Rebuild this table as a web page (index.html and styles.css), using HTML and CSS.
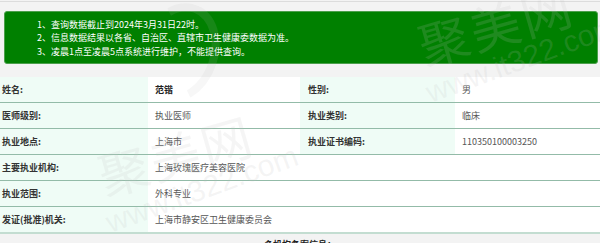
FILE: index.html
```html
<!DOCTYPE html>
<html lang="zh-CN">
<head>
<meta charset="utf-8">
<title>医师执业注册信息</title>
<link rel="stylesheet" href="styles.css">
</head>
<body>
<div class="page">
  <div class="topline"></div>
  <div class="notice">
    <ol class="notice-list">
      <li>1、查询数据截止到2024年3月31日22时。</li>
      <li>2、信息数据结果以各省、自治区、直辖市卫生健康委数据为准。</li>
      <li>3、凌晨1点至凌晨5点系统进行维护，不能提供查询。</li>
    </ol>
  </div>
  <table class="info">
    <colgroup>
      <col class="c1"><col class="c2"><col class="c3"><col class="c4">
    </colgroup>
    <tr>
      <th class="lab first">姓名:</th><td class="val strong">范锴</td>
      <th class="lab">性别:</th><td class="val">男</td>
    </tr>
    <tr>
      <th class="lab first">医师级别:</th><td class="val">执业医师</td>
      <th class="lab">执业类别:</th><td class="val">临床</td>
    </tr>
    <tr>
      <th class="lab first">执业地点:</th><td class="val">上海市</td>
      <th class="lab">执业证书编码:</th><td class="val">110350100003250</td>
    </tr>
    <tr>
      <th class="lab first">主要执业机构:</th><td class="val" colspan="3">上海玫瑰医疗美容医院</td>
    </tr>
    <tr>
      <th class="lab first">执业范围:</th><td class="val" colspan="3">外科专业</td>
    </tr>
    <tr class="last">
      <th class="lab first">发证(批准)机关:</th><td class="val" colspan="3">上海市静安区卫生健康委员会</td>
    </tr>
    <tr class="section">
      <td colspan="4">多机构备案信息：</td>
    </tr>
  </table>
  <div class="wm wm-a" aria-hidden="true">
    <span class="wm-title">聚美网</span>
    <span class="wm-url">www.it322.com</span>
  </div>
  <div class="wm wm-b" aria-hidden="true">
    <span class="wm-title">聚美网</span>
    <span class="wm-url">www.it322.com</span>
  </div>
  <div class="wm-ring"></div>
</div>
</body>
</html>
```
FILE: styles.css
```css
html, body {
  margin: 0;
  padding: 0;
}
body {
  background: #f3f3f3;
  font-family: "Noto Sans CJK SC", "Noto Sans", sans-serif;
  font-size: 9px;
  color: #555;
  overflow: hidden;
}
.page {
  position: relative;
  width: 600px;
  height: 243px;
  overflow: hidden;
}
.topline {
  margin-top: 1px;
  border-top: 1px solid #dcdcdc;
}
.notice {
  margin: 9px 2px 0 4px;
  background: #008000;
  border: 1px solid #4c9f4c;
  border-radius: 3px;
  padding: 6px 0 5px 32px;
  color: #fff;
  line-height: 13.3px;
}
.notice-list {
  margin: 0;
  padding: 0;
  list-style: none;
}
.info {
  margin-top: 13px;
  width: 600px;
  border-collapse: collapse;
  table-layout: fixed;
}
.c1 { width: 148px; }
.c2 { width: 152px; }
.c3 { width: 155px; }
.c4 { width: 145px; }
.info th, .info td {
  height: 25px;
  padding: 0 0 0 7px;
  border-bottom: 1px solid #93bba8;
  text-align: left;
  vertical-align: middle;
  font-weight: normal;
}
.info .lab {
  background: #effcf6;
  color: #333;
  font-weight: bold;
  padding-left: 8px;
}
.info .lab.first {
  padding-left: 2px;
}
.info .val {
  background: #fff;
  color: #555;
}
.info .val.strong {
  color: #222;
  font-weight: bold;
}
.info tr.last th, .info tr.last td {
  border-bottom: 2px solid #c3ddd1;
}
.info tr.section td {
  background: #f3f3f3;
  border-bottom: none;
  text-align: center;
  color: #222;
  font-weight: bold;
  padding: 4px 0 0 0;
  vertical-align: top;
  height: 20px;
}
.wm {
  position: absolute;
  pointer-events: none;
  transform-origin: left top;
  transform: rotate(-16deg);
  color: rgba(190, 190, 190, 0.16);
  white-space: nowrap;
}
.wm-title {
  display: block;
  font-size: 50px;
  line-height: 52px;
  letter-spacing: 3px;
}
.wm-url {
  display: block;
  font-family: "Liberation Sans", sans-serif;
  font-size: 30px;
  line-height: 32px;
  margin-left: -6px;
  transform: rotate(-4deg);
}
.wm-a {
  left: 412px;
  top: 20px;
}
.wm-b {
  left: 92px;
  top: 150px;
}
.wm-ring {
  position: absolute;
  pointer-events: none;
  left: 140px;
  top: 2px;
  width: 62px;
  height: 86px;
  border-radius: 50%;
  border: 8px solid rgba(190, 190, 190, 0.12);
  border-left-color: transparent;
  border-bottom-color: transparent;
  transform: rotate(20deg);
}
```
